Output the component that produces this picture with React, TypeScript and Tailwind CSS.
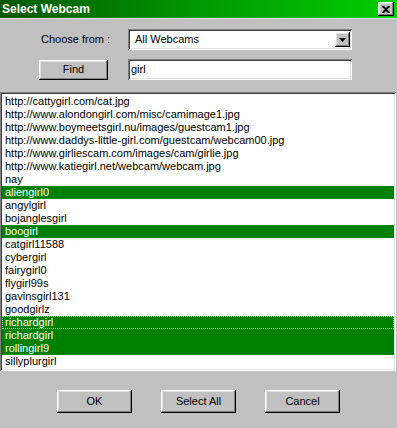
import React from 'react';

const items = [
  { name: 'http://cattygirl.com/cat.jpg' },
  { name: 'http://www.alondongirl.com/misc/camimage1.jpg' },
  { name: 'http://www.boymeetsgirl.nu/images/guestcam1.jpg' },
  { name: 'http://www.daddys-little-girl.com/guestcam/webcam00.jpg' },
  { name: 'http://www.girliescam.com/images/cam/girlie.jpg' },
  { name: 'http://www.katiegirl.net/webcam/webcam.jpg' },
  { name: 'nay' },
  { name: 'aliengirl0', sel: true },
  { name: 'angylgirl' },
  { name: 'bojanglesgirl' },
  { name: 'boogirl', sel: true },
  { name: 'catgirl11588' },
  { name: 'cybergirl' },
  { name: 'fairygirl0' },
  { name: 'flygirl99s' },
  { name: 'gavinsgirl131' },
  { name: 'goodgirlz' },
  { name: 'richardgirl', sel: true, focus: true },
  { name: 'richardgirl', sel: true },
  { name: 'rollingirl9', sel: true },
  { name: 'sillyplurgirl' },
];

const btn =
  'flex items-center justify-center bg-[#c0c0c0] text-black shadow-[inset_-1px_-1px_#000,inset_1px_1px_#fff,inset_-2px_-2px_#808080,inset_2px_2px_#dfdfdf]';
const sunken =
  'bg-white shadow-[inset_1px_1px_#808080,inset_-1px_-1px_#fff,inset_2px_2px_#404040,inset_-2px_-2px_#dfdfdf]';

export default function App() {
  return (
    <div className="flex h-[428px] w-[397px] flex-col bg-[#c0c0c0] text-[11px] text-black [font-family:'Liberation_Sans',Arial,sans-serif]">
      {/* Title bar */}
      <div className="flex h-[18px] items-center justify-between bg-gradient-to-r from-[#005800] via-[#009800] to-[#00d000] pl-[2px] pr-[3px]">
        <span className="text-[12px] font-bold text-white">Select Webcam</span>
        <button className={`${btn} h-[14px] w-[16px]`}>
          <svg width="8" height="7" viewBox="0 0 8 7">
            <path d="M0 0h2l2 2 2-2h2v1L5 3.5 8 6v1H6L4 5 2 7H0V6l3-2.5L0 1z" fill="#000" />
          </svg>
        </button>
      </div>
      <div className="h-px bg-[#dfdfdf]" />

      {/* Form */}
      <div className="flex flex-col gap-[9px] pl-[39px] pt-[10px]">
        <div className="flex h-[21px] items-center">
          <span className="w-[89px] pl-[2px]">Choose from :</span>
          <div className={`${sunken} flex h-[21px] w-[224px] items-center justify-between pl-[7px] pr-[2px]`}>
            <span>All Webcams</span>
            <div className={`${btn} h-[15px] w-[15px]`}>
              <svg width="7" height="4" viewBox="0 0 7 4">
                <path d="M0 0h7L3.5 4z" fill="#000" />
              </svg>
            </div>
          </div>
        </div>
        <div className="flex h-[21px] items-center">
          <button className={`${btn} mr-[20px] h-[20px] w-[69px]`}>Find</button>
          <div className={`${sunken} flex h-[21px] w-[224px] items-center pl-[3px]`}>girl</div>
        </div>
      </div>

      {/* List */}
      <div className={`${sunken} mr-[1px] mt-[12px] h-[279px] p-[2px]`}>
        <div className="pt-px">
          {items.map((it, i) => (
            <div
              key={i}
              className={`h-[13px] whitespace-nowrap pl-[3px] leading-[13px] ${
                it.sel ? 'bg-[#008000] text-white' : ''
              } ${it.focus ? 'outline-1 -outline-offset-1 outline-dotted outline-[#9fcf9f]' : ''}`}
            >
              {it.name}
            </div>
          ))}
        </div>
      </div>

      {/* Buttons */}
      <div className="flex justify-center gap-[29px] pt-[19px]">
        <button className={`${btn} h-[23px] w-[75px]`}>OK</button>
        <button className={`${btn} h-[23px] w-[75px]`}>Select All</button>
        <button className={`${btn} h-[23px] w-[75px]`}>Cancel</button>
      </div>
    </div>
  );
}
